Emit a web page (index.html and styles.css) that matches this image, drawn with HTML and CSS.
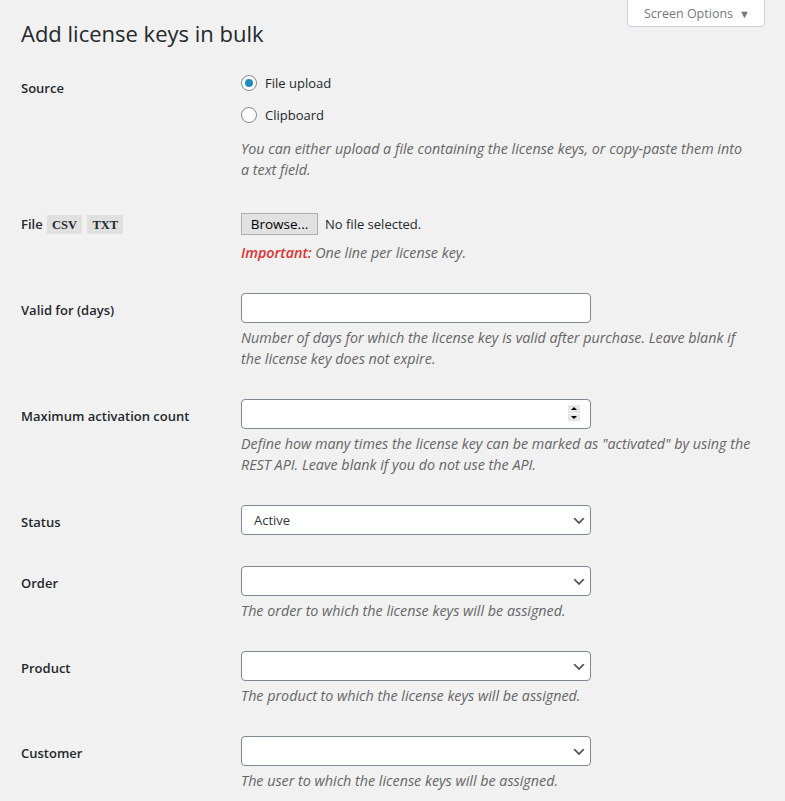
FILE: index.html
```html
<!DOCTYPE html>
<html lang="en">
<head>
<meta charset="utf-8">
<title>Add license keys in bulk</title>
<link rel="stylesheet" href="styles.css">
</head>
<body>
<div class="screen-meta">
  <button class="show-settings" type="button">Screen Options <span class="arrow">▼</span></button>
</div>
<div class="wrap">
  <h1 class="page-title">Add license keys in bulk</h1>
  <form class="form-table">
    <div class="row">
      <div class="th source-th">Source</div>
      <div class="td">
        <label class="radio-line"><span class="radio checked"></span>File upload</label>
        <label class="radio-line"><span class="radio"></span>Clipboard</label>
        <p class="description source-desc">You can either upload a file containing the license keys, or copy-paste them into a text field.</p>
      </div>
    </div>
    <div class="row">
      <div class="th file-th">File <code>CSV</code> <code>TXT</code></div>
      <div class="td">
        <div class="file-line"><span class="browse">Browse...</span><span class="file-name">No file selected.</span></div>
        <p class="description"><strong class="important">Important:</strong> One line per license key.</p>
      </div>
    </div>
    <div class="row">
      <div class="th">Valid for (days)</div>
      <div class="td">
        <div class="input"></div>
        <p class="description">Number of days for which the license key is valid after purchase. Leave blank if the license key does not expire.</p>
      </div>
    </div>
    <div class="row">
      <div class="th">Maximum activation count</div>
      <div class="td">
        <div class="input number"><span class="spinner"><span class="up"></span><span class="down"></span></span></div>
        <p class="description">Define how many times the license key can be marked as "activated" by using the REST API. Leave blank if you do not use the API.</p>
      </div>
    </div>
    <div class="row">
      <div class="th">Status</div>
      <div class="td">
        <div class="select">Active</div>
      </div>
    </div>
    <div class="row">
      <div class="th">Order</div>
      <div class="td">
        <div class="select"></div>
        <p class="description">The order to which the license keys will be assigned.</p>
      </div>
    </div>
    <div class="row">
      <div class="th">Product</div>
      <div class="td">
        <div class="select"></div>
        <p class="description">The product to which the license keys will be assigned.</p>
      </div>
    </div>
    <div class="row">
      <div class="th">Customer</div>
      <div class="td">
        <div class="select"></div>
        <p class="description">The user to which the license keys will be assigned.</p>
      </div>
    </div>
  </form>
</div>
</body>
</html>
```
FILE: styles.css
```css
html, body {
  margin: 0;
  padding: 0;
}
body {
  background: #f1f1f1;
  color: #23282d;
  font-family: "Open Sans", "Noto Sans", sans-serif;
  font-size: 13px;
  line-height: 1.4;
  overflow: hidden;
}
.screen-meta {
  position: absolute;
  top: 0;
  right: 20px;
}
.show-settings {
  display: flex;
  align-items: center;
  gap: 6px;
  box-sizing: border-box;
  width: 138px;
  height: 28px;
  margin-top: -1px;
  padding: 0 0 0 16px;
  background: #fff;
  border: 1px solid #ccd0d4;
  border-radius: 0 0 4px 4px;
  color: #72777c;
  font-family: inherit;
  font-size: 12.5px;
}
.show-settings .arrow {
  font-size: 11px;
  color: #72777c;
}
.wrap {
  padding: 0 20px 0 21px;
}
.page-title {
  margin: 0;
  padding: 18px 0 0;
  font-size: 22px;
  font-weight: 400;
  line-height: 30px;
  height: 30px;
}
.form-table {
  margin-top: 11px;
}
.row {
  display: grid;
  grid-template-columns: 210px 1fr;
}
.th {
  padding: 23px 10px 20px 0;
  font-weight: 600;
  line-height: 18px;
}
.source-th {
  padding-top: 20px;
}
.td {
  padding: 15px 10px;
  line-height: 18px;
}
.radio-line {
  display: flex;
  align-items: center;
  gap: 8px;
  height: 18px;
  margin-bottom: 14px;
  color: #23282d;
}
.radio {
  box-sizing: border-box;
  width: 16px;
  height: 16px;
  border: 1px solid #7e8993;
  border-radius: 50%;
  background: #fff;
  display: flex;
  align-items: center;
  justify-content: center;
}
.radio.checked::after {
  content: "";
  width: 8px;
  height: 8px;
  border-radius: 50%;
  background: #1e8cbe;
}
.description {
  margin: 4px 0 0;
  font-style: italic;
  font-size: 14.3px;
  color: #666;
  line-height: 21px;
  max-width: 511px;
}
.source-desc {
  margin-top: 0;
}
.important {
  color: #dc3232;
  font-weight: 600;
}
code {
  display: inline-block;
  font-family: "Liberation Serif", serif;
  font-size: 12.5px;
  line-height: 14px;
  padding: 3px 5px 2px;
  margin: 0 1px;
  background: #e0e0e0;
  color: #23282d;
  font-weight: 700;
}
.file-th {
  padding-top: 20px;
}
.file-line {
  display: flex;
  align-items: center;
  height: 26px;
  margin-top: 2px;
}
.browse {
  box-sizing: border-box;
  display: inline-flex;
  align-items: center;
  justify-content: center;
  width: 77px;
  height: 22px;
  margin-top: -2px;
  background: #e1e1e1;
  border: 1px solid #adadad;
  color: #000;
  font-size: 13.5px;
}
.file-name {
  margin-left: 7px;
  margin-top: -2px;
  color: #23282d;
  font-size: 13px;
}
.input, .select {
  box-sizing: border-box;
  width: 350px;
  height: 30px;
  background: #fff;
  border: 1px solid #7e8993;
  border-radius: 4px;
  position: relative;
}
.select {
  display: flex;
  align-items: center;
  padding: 0 24px 0 12px;
  color: #32373c;
  background: #fff url("data:image/svg+xml;charset=US-ASCII,%3Csvg%20width%3D%2220%22%20height%3D%2220%22%20xmlns%3D%22http%3A%2F%2Fwww.w3.org%2F2000%2Fsvg%22%3E%3Cpath%20d%3D%22M5%206l5%205%205-5%202%201-7%207-7-7%202-1z%22%20fill%3D%22%23555%22%2F%3E%3C%2Fsvg%3E") no-repeat right 3px top 55%;
  background-size: 16px 16px;
}
.spinner {
  position: absolute;
  right: 10px;
  top: 5px;
  width: 12px;
  height: 16px;
  background: #e6e6e6;
  display: flex;
  flex-direction: column;
}
.spinner .up, .spinner .down {
  flex: 1;
  display: flex;
  align-items: center;
  justify-content: center;
}
.spinner .up {
  border-bottom: 1px solid #fff;
}
.spinner .up::after {
  content: "";
  border-left: 3px solid transparent;
  border-right: 3px solid transparent;
  border-bottom: 3px solid #000;
}
.spinner .down::after {
  content: "";
  border-left: 3px solid transparent;
  border-right: 3px solid transparent;
  border-top: 3px solid #000;
}
```
